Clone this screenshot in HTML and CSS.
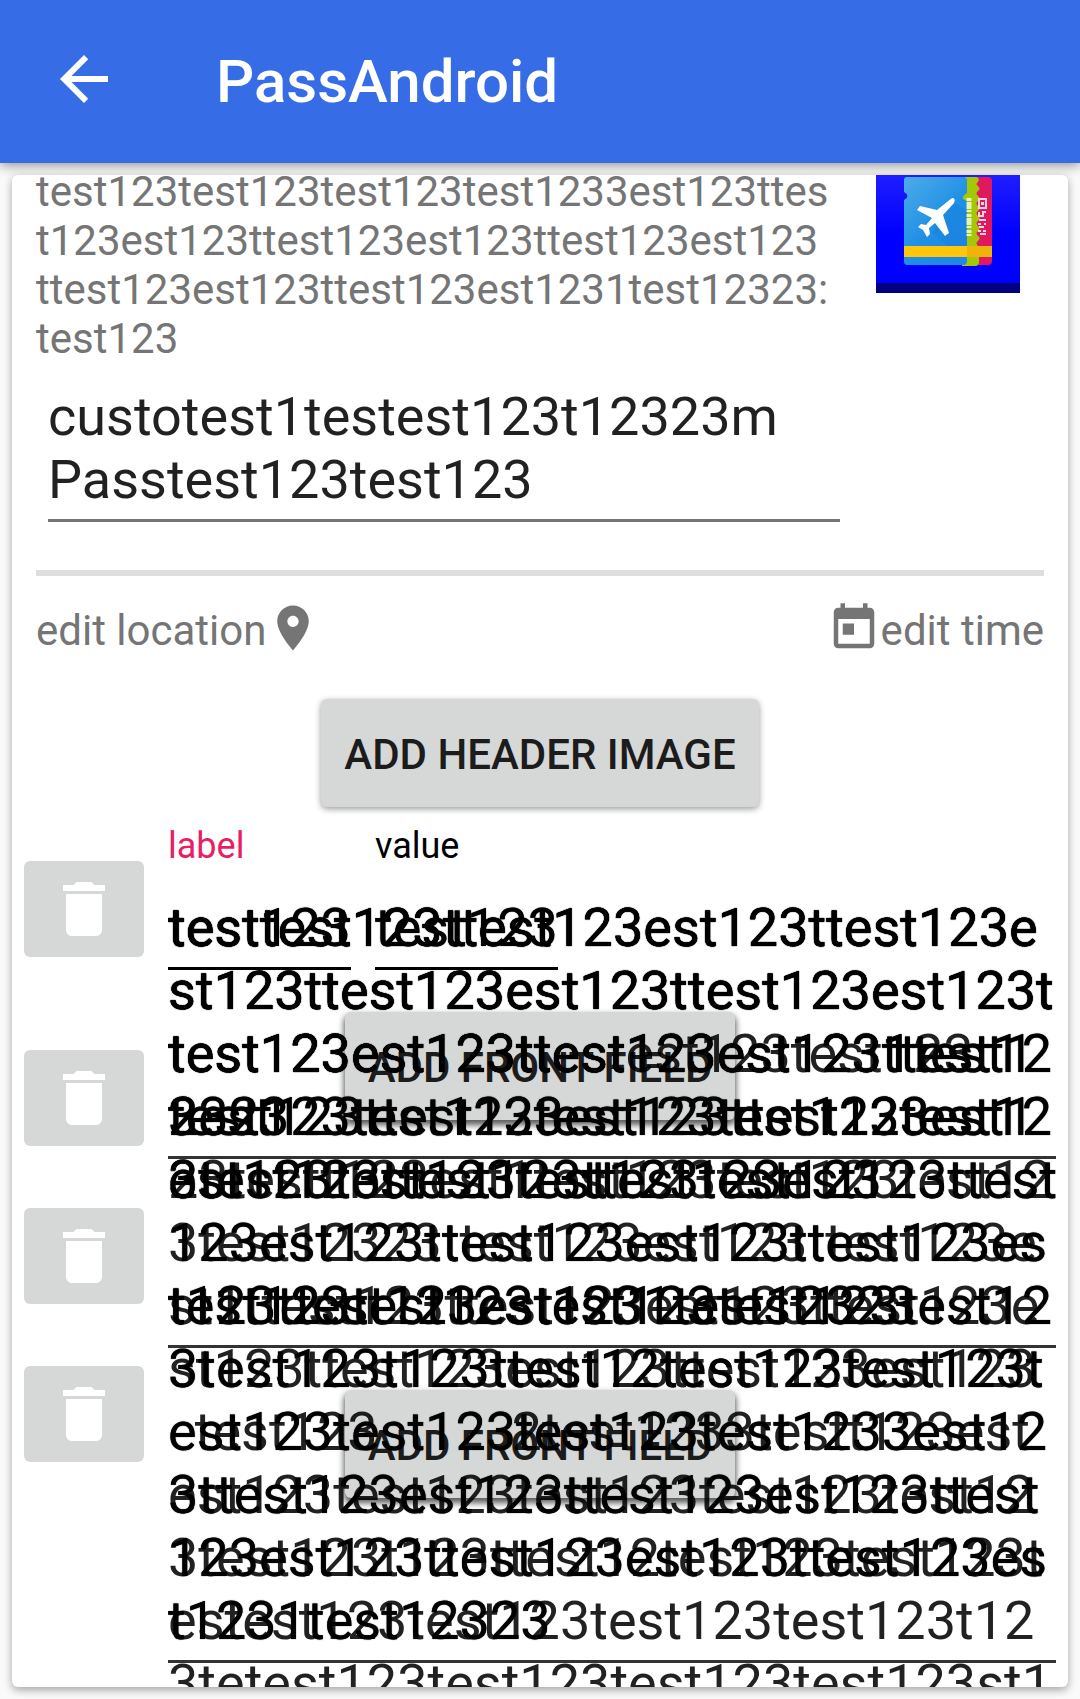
FILE: index.html
```html
<!DOCTYPE html>
<html lang="en">
<head>
<meta charset="utf-8">
<meta name="viewport" content="width=device-width, initial-scale=1">
<title>PassAndroid</title>
<link rel="stylesheet" href="styles.css">
</head>
<body>
<svg width="0" height="0" class="sprite" aria-hidden="true">
  <symbol id="trash" viewBox="0 0 24 24"><path d="M6 19c0 1.100.9 2 2 2h8c1.100 0 2-.9 2-2V7H6v12zM19 4h-3.500l-1-1h-5l-1 1H5v2h14V4z"/></symbol>
</svg>
<header class="app-bar">
  <button class="back" aria-label="Navigate up">
    <svg viewBox="0 0 24 24"><path d="M20 11H7.830l5.590-5.590L12 4l-8 8 8 8 1.410-1.410L7.830 13H20v-2z"/></svg>
  </button>
  <h1>PassAndroid</h1>
</header>
<main class="card">
  <section class="summary">
    <div class="summary-text">
      <p class="info">test123test123test123test1233est123ttes<br>t123est123ttest123est123ttest123est123<br>ttest123est123ttest123est1231test12323:<br>test123</p>
      <textarea class="field title-field" rows="2" aria-label="Description" spellcheck="false">custotest1testest123t12323m
Passtest123test123</textarea>
    </div>
    <svg class="pass-icon" viewBox="0 0 144 118" role="img" aria-label="Pass icon">
      <defs>
        <linearGradient id="back" x1="0" y1="0" x2="0" y2="1"><stop offset="0" stop-color="#1e1eff"/><stop offset=".5" stop-color="#0000ff"/></linearGradient>
        <linearGradient id="ticket" x1="0" y1="0" x2=".7" y2="1"><stop offset="0" stop-color="#4dabea"/><stop offset=".6" stop-color="#2090e4"/><stop offset="1" stop-color="#1e88e5"/></linearGradient>
      </defs>
      <rect width="144" height="118" fill="url(#back)"/>
      <rect y="108" width="144" height="10" fill="#000080"/>
      <path d="M98 2h14q4 0 4 4v80q0 4-4 4H98z" fill="#e0195f"/>
      <path d="M86 2h15q3 2 1 5-3 2 0 4 3 3 0 5-3 2 0 5 3 2 0 5-3 2 0 5 3 2 0 5-3 2 0 5 3 2 0 5-3 2 0 5 3 2 0 5-3 2 0 5 3 2 0 5-3 2 0 5l1 3v13q0 4-4 4H86z" fill="#a4c808"/>
      <path d="M31 2h57q3 0 3 4v12q-5 3-4 6l4 2v60q0 4-4 4H31q-3 0-3-4V25q7-4 0-8V5q0-3 3-3z" fill="url(#ticket)"/>
      <path d="M66 42l14-14 11 8v35H72L56 58z" fill="#187fdc" opacity=".45"/>
      <rect x="28" y="71" width="63" height="11" fill="#ffc60b"/>
      <rect x="91" y="71" width="25" height="11" fill="#f0b30c"/>
      <path d="M76 23q4 0 2 5L67 40l6 18-4 3-10-13-6 5 1 6-3 3-4-7-5-3 3-3 5 1 6-7-15-8 3-4 17 4z" fill="#fff"/>
      <path d="M93 23v38" stroke="#e8f2bd" stroke-width="5" stroke-dasharray="3 1 7 1 2 2"/>
      <path d="M103 24h7v9h-7zM103 37v4h4v-4h3M103 45h7M102 49h3M108 49h2M103 52h5M102 56h3M107 56h3M104 59h6" fill="none" stroke="#ffd5e2" stroke-width="2"/>
      <path d="M105 27h3v3h-3z" fill="#ffd5e2"/>
    </svg>
  </section>
  <hr class="divider">
  <nav class="edit-row">
    <a href="#location">edit location<svg viewBox="0 0 24 24"><path d="M12 2C8.130 2 5 5.130 5 9c0 5.250 7 13 7 13s7-7.750 7-13c0-3.870-3.130-7-7-7zm0 9.500c-1.380 0-2.500-1.120-2.500-2.500s1.120-2.500 2.500-2.500 2.500 1.120 2.500 2.500-1.120 2.500-2.500 2.500z"/></svg></a>
    <a href="#time"><svg viewBox="0 0 24 24"><path d="M19 3h-1V1h-2v2H8V1H6v2H5c-1.110 0-1.990.9-1.990 2L3 19c0 1.100.89 2 2 2h14c1.100 0 2-.9 2-2V5c0-1.100-.9-2-2-2zm0 16H5V8h14v11zM7 10h5v5H7z"/></svg>edit time</a>
  </nav>
  <button class="raised header-button">ADD HEADER IMAGE</button>
  <section class="fields">
    <div class="deletes">
      <button class="delete" aria-label="Delete field 1"><svg><use href="#trash"/></svg></button>
      <button class="delete" aria-label="Delete field 2"><svg><use href="#trash"/></svg></button>
      <button class="delete" aria-label="Delete field 3"><svg><use href="#trash"/></svg></button>
      <button class="delete" aria-label="Delete field 4"><svg><use href="#trash"/></svg></button>
    </div>
    <div class="stack">
      <button class="raised front-button">ADD FRONT FIELD</button>
      <button class="raised front-button second">ADD FRONT FIELD</button>
      <div class="pair">
        <label class="accent" for="label-1">label</label>
        <label for="value-1">value</label>
        <input class="field strong" id="label-1" value="test123">
        <input class="field strong" id="value-1" value="test123">
      </div>
      <textarea class="field long strong" rows="4" aria-label="Field 2" spellcheck="false">testtest123ttest123est123ttest123e
st123ttest123est123ttest123est123t
test123est123ttest123est1231test1
2323</textarea>
      <textarea class="field long strong" rows="7" aria-label="Field 3" spellcheck="false">testtest123ttest123est123ttest123e
st123ttest123est123ttest123est123t
test123est123ttest123est123ttest12
3est123ttest123est123ttest123est1
3test123ttest123ttest123est123ttest
123est123ttest123est123ttest123es
t123ttest123est1231test12323</textarea>
      <textarea class="field long strong plain from-4" rows="2" aria-label="Field 4" spellcheck="false">test123test123test123test123test12
est123test123test123test123</textarea>
      <textarea class="field long strong from-7" rows="6" aria-label="Field 5" spellcheck="false">test123test123test123test123test12
3test123t123ttest12test123test123t
est123test123test123test1233est12
3ttest123est123ttest123est123ttest
123est123ttest123est123ttest123es
t1231test12323</textarea>
      <textarea class="field long plain from-3" rows="11" aria-label="Field 6" spellcheck="false">test123est123ttestest123test123t

23testt123est1test123test123test12
3test12323ttest123est123ttest123e
st1ttest123ttest123est123ttest123e
st123ttest123est123ttest123est123
  test123          2test1233testt123est
est123test123test123test123test12
3test123t123ttest12test123test123t
estest123test123test123test123t12
3tetest123test123test123test123st1</textarea>
    </div>
  </section>
</main>
</body>
</html>
```
FILE: styles.css
```css
* { box-sizing: border-box; }

body {
  margin: 0;
  height: 100vh;
  display: flex;
  flex-direction: column;
  background: #fafafa;
  color: rgba(0, 0, 0, .87);
  font-family: Roboto, sans-serif;
  overflow: hidden;
}

button, input, textarea { font: inherit; color: inherit; margin: 0; }
.sprite { position: absolute; }

.app-bar {
  flex: none;
  height: 163px;
  display: flex;
  align-items: center;
  gap: 96px;
  padding: 0 48px;
  background: #366de7;
  color: #fff;
  box-shadow: 0 2px 12px rgba(0, 0, 0, .45);
}
.back { border: 0; padding: 0 0 6px; background: none; display: flex; }
.back svg { width: 72px; height: 72px; fill: #fff; }
h1 { margin: 0; font-size: 60px; line-height: 70px; font-weight: 500; }

.card {
  flex: 1;
  min-height: 0;
  display: flex;
  flex-direction: column;
  margin: 12px;
  background: #fff;
  border-radius: 6px;
  box-shadow: 0 3px 8px rgba(0, 0, 0, .35);
  overflow: hidden;
}
.card > * { flex: none; }

.summary { display: flex; justify-content: space-between; align-items: flex-start; padding: 0 48px 0 24px; }
.summary-text { flex: 1; min-width: 0; margin: -8px 36px 0 0; }
.info { margin: 0 0 22px; font-size: 42px; line-height: 49px; color: #757575; white-space: nowrap; }
.pass-icon { flex: none; width: 144px; height: 118px; }

.field {
  display: block;
  width: 100%;
  border: 0;
  border-bottom: 3px solid #333;
  border-radius: 0;
  padding: 0 0 8px;
  background: none;
  font-size: 54px;
  line-height: 63px;
  resize: none;
  overflow: hidden;
  white-space: pre;
  outline: 0;
}
.title-field { width: auto; min-width: calc(100% - 12px); margin-left: 12px; border-color: #757575; }

.divider { align-self: stretch; height: 6px; margin: 48px 24px 25px; border: 0; background: #dedede; }

.edit-row { display: flex; justify-content: space-between; padding: 0 24px; }
.edit-row a {
  display: flex;
  align-items: flex-end;
  color: #757575;
  font-size: 42px;
  line-height: 49px;
  text-decoration: none;
}
.edit-row svg { width: 54px; height: 54px; fill: #757575; }

.raised {
  height: 108px;
  border: 0;
  border-radius: 6px;
  padding: 2px 23px 0;
  background: #d6d8d7;
  color: #1c1c1c;
  font-size: 42px;
  font-weight: 500;
  white-space: nowrap;
  box-shadow: 0 2px 6px rgba(0, 0, 0, .4);
}
.header-button { align-self: center; margin-top: 44px; }

.fields { display: flex; align-items: flex-start; gap: 24px; padding: 0 12px; }
.deletes { flex: none; display: flex; flex-direction: column; gap: 62px; padding-top: 54px; }
.delete {
  display: flex;
  align-items: center;
  justify-content: center;
  width: 120px;
  height: 96px;
  border: 0;
  border-radius: 6px;
  padding: 0;
  background: #d6d8d7;
}
.delete:first-child { margin-bottom: 31px; }
.delete svg { width: 72px; height: 72px; fill: #fff; }

.stack { flex: 1; min-width: 0; display: grid; align-items: start; }
.stack > * { grid-area: 1 / 1; }

/* The add buttons are centred on the card, not on the text column. */
.front-button { justify-self: center; margin: 205px 144px 0 0; box-shadow: 0 4px 6px 1px rgba(0, 0, 0, .65); }
.front-button.second { margin-top: 583px; }

.pair {
  display: grid;
  grid-template-columns: 183px 183px;
  column-gap: 24px;
  row-gap: 29px;
  padding-top: 18px;
  color: #000;
  font-size: 36px;
  line-height: 42px;
}
.pair .field { height: 74px; }
.accent { color: #e91e63; }

.strong { color: #000; border-color: #000; text-shadow: 0 0 1px #000; }
.long { margin-top: 89px; border-color: #333; }
.plain { border-color: transparent; }
.long.from-3 { margin-top: 215px; }
.long.from-4 { margin-top: 278px; }
.long.from-7 { margin-top: 467px; }
```
